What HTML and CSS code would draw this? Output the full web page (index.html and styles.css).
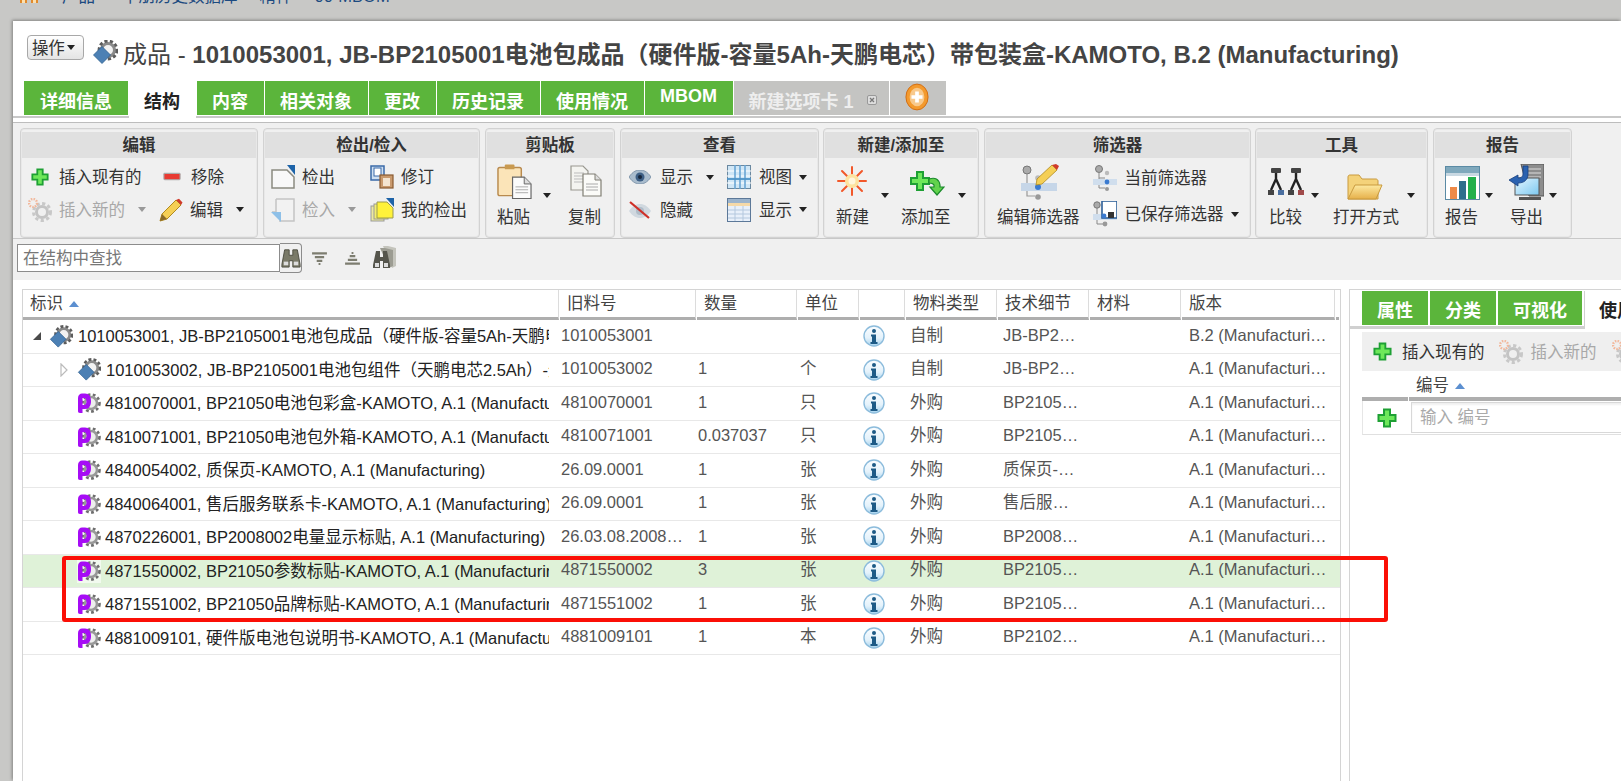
FILE: index.html
```html
<!DOCTYPE html>
<html lang="zh-CN">
<head>
<meta charset="utf-8">
<title>成品 - 1010053001</title>
<link rel="stylesheet" href="styles.css">
</head>
<body>
<svg class="defs" xmlns="http://www.w3.org/2000/svg">
  <defs>
    <linearGradient id="gInfo" x1="0" y1="0" x2="0" y2="1"><stop offset="0" stop-color="#fbfdff"/><stop offset=".6" stop-color="#e4f2fb"/><stop offset="1" stop-color="#a4d2ee"/></linearGradient>
    <linearGradient id="gFolder" x1="0" y1="0" x2="0" y2="1"><stop offset="0" stop-color="#fde9a0"/><stop offset="1" stop-color="#e6b04a"/></linearGradient>
    <linearGradient id="gScreen" x1="0" y1="0" x2="1" y2="1"><stop offset="0" stop-color="#e4f6ff"/><stop offset="1" stop-color="#7cc8f0"/></linearGradient>
    <symbol id="gd" viewBox="0 0 26 24"><circle cx="16" cy="10" r="6.500" fill="#f2f2f2" stroke="#8a8a8a" stroke-width="3"/><circle cx="16" cy="10" r="9" fill="none" stroke="#5c5c5c" stroke-width="2.800" stroke-dasharray="3.200 2.300"/><path d="M10 6.500l8.500 8.500L10 23.500 1.500 15z" fill="#4c80b4" stroke="#2f5f90" stroke-width=".8"/></symbol>
    <symbol id="part" viewBox="0 0 24 24"><rect width="24" height="24" fill="#fff" opacity=".6"/><circle cx="14" cy="12" r="6" fill="#eee" stroke="#999" stroke-width="2.600"/><circle cx="14" cy="12" r="8.500" fill="none" stroke="#6e6e6e" stroke-width="2.600" stroke-dasharray="2.800 2.400"/><path fill-rule="evenodd" d="M1 7c0-3 2-4.500 4-4.500h3c4 0 6 3 6 7.500s-2 8-6 8H5.500v4H3c-1.500 0-2-1-2-2zM5.500 7v7H7c1.500 0 2.500-1.500 2.500-3.500S8.500 7 7 7z" fill="#a60cf5"/></symbol>
    <symbol id="info" viewBox="0 0 22 22"><circle cx="11" cy="11" r="10" fill="url(#gInfo)" stroke="#8cbcdc" stroke-width="1.400"/><circle cx="11" cy="6" r="2" fill="#1d5a86"/><path d="M8 9.500h5v7.500h1.500v2h-7v-2H9v-5.500H8z" fill="#1d5a86"/></symbol>
    <symbol id="plus" viewBox="0 0 20 20"><path d="M7 1.500h6v5.500h5.500v6H13v5.500H7V13H1.500V7H7z" fill="#6ee85a" stroke="#1ea034" stroke-width="2"/></symbol>
    <symbol id="minus" viewBox="0 0 20 20"><rect x="1" y="6" width="18" height="7" rx="1" fill="#e83a32" stroke="#aaa" stroke-width="1.200"/></symbol>
    <symbol id="gearnew" viewBox="0 0 24 24"><circle cx="14" cy="14" r="5.500" fill="none" stroke="#c4c4c4" stroke-width="3"/><circle cx="14" cy="14" r="8.500" fill="none" stroke="#c8c8c8" stroke-width="3" stroke-dasharray="3.200 2.500"/><circle cx="5" cy="5" r="4" fill="none" stroke="#f2b79a" stroke-width="2.400" stroke-dasharray="1.500 1.200"/></symbol>
    <symbol id="pencil" viewBox="0 0 24 24"><path d="M1 23l2-7L17 2l5 5L8 21z" fill="#f5cf55" stroke="#b08a20" stroke-width="1"/><path d="M17 2l5 5 1.500-2.500L20 .8z" fill="#d03a2a"/><path d="M1 23l2-7 5 5z" fill="#8a6a2a"/></symbol>
    <symbol id="checkout" viewBox="0 0 24 24"><path d="M1 5h15l7 7v11H1z" fill="#f8f8f8" stroke="#8a8a80" stroke-width="1.500"/><path d="M16 0h8v10z" fill="#1d63a8"/></symbol>
    <symbol id="rev" viewBox="0 0 24 24"><rect x="1" y="1" width="13" height="14" fill="#cfe0f2" stroke="#3a69a8" stroke-width="1.500"/><rect x="4" y="3" width="7" height="8" fill="#fff" stroke="#3a69a8"/><rect x="10" y="10" width="13" height="13" fill="#c99a6e" stroke="#8a5a30" stroke-width="1.200"/><rect x="13" y="13" width="7" height="8" fill="#f4e4d0"/></symbol>
    <symbol id="checkin" viewBox="0 0 24 24"><path d="M5 1h18v22H8" fill="#f2f2f2" stroke="#c4c4c4" stroke-width="1.500"/><path d="M5 1v13H1" fill="none" stroke="#c4c4c4" stroke-width="1.500"/><path d="M0 14h10v10z" fill="#8ec0e8"/></symbol>
    <symbol id="mine" viewBox="0 0 24 24"><rect x="1" y="8" width="13" height="15" fill="#ece9a0" stroke="#999" stroke-width="1"/><rect x="4" y="6" width="14" height="15" fill="#f3ee70" stroke="#999" stroke-width="1"/><path d="M7 4h10l6 6v10H7z" fill="#fff23a" stroke="#9a9a50" stroke-width="1"/><path d="M16 0h8v9z" fill="#1d63a8"/></symbol>
    <symbol id="paste" viewBox="0 0 36 36"><rect x="1" y="3" width="24" height="29" rx="2" fill="#fbe4b8" stroke="#b88a4e" stroke-width="1.500"/><rect x="8" y="0" width="10" height="5" rx="1" fill="#c99a50"/><path d="M16 13h12l7 7v15H16z" fill="#fbfbfb" stroke="#666" stroke-width="1.200"/><path d="M28 13v7h7" fill="#ddd" stroke="#666"/><path d="M19 23h13M19 26h13M19 29h13" stroke="#aaa"/></symbol>
    <symbol id="copy" viewBox="0 0 32 32"><path d="M1 1h12l5 5v19H1z" fill="#f4f4f0" stroke="#999890" stroke-width="1.200"/><path d="M4 8h10M4 11h10M4 14h10M4 17h10" stroke="#bbb"/><path d="M13 9h12l6 6v16H13z" fill="#fbfbf8" stroke="#807f74" stroke-width="1.200"/><path d="M25 9v6h6" fill="#ddd" stroke="#807f74"/><path d="M16 19h12M16 22h12M16 25h12" stroke="#aaa"/></symbol>
    <symbol id="eye" viewBox="0 0 22 14"><path d="M0 7C4 1 8 0 11 0s7 1 11 7c-4 6-8 7-11 7S4 13 0 7z" fill="#a9bccd" stroke="#7088a0" stroke-width=".8"/><circle cx="11" cy="7" r="4.500" fill="#3d5f85"/><circle cx="11" cy="7" r="2" fill="#16263c"/></symbol>
    <symbol id="eyeoff" viewBox="0 0 22 18"><path d="M0 10C4 4 8 3 11 3s7 1 11 7c-4 6-8 7-11 7S4 16 0 10z" fill="#d0d8df"/><circle cx="11" cy="10" r="4" fill="#b0bcc8"/><path d="M1 1l19 16" stroke="#cf3028" stroke-width="2.200"/></symbol>
    <symbol id="grid" viewBox="0 0 24 24"><rect x=".5" y=".5" width="23" height="23" fill="#cfe6f6" stroke="#6a88a0"/><path d="M0 6h24M0 11h24M0 18h24" stroke="#fff"/><path d="M8 0v24M13 0v24M18 0v24" stroke="#6aa6d4" stroke-width="1.600"/><path d="M0 14h24" stroke="#4e94c8" stroke-width="1.800"/></symbol>
    <symbol id="table" viewBox="0 0 24 24"><rect x=".5" y=".5" width="23" height="23" fill="#e8f0fa" stroke="#5c7898"/><rect x="1" y="1" width="22" height="4" fill="#9cb4cc"/><rect x="1" y="5" width="22" height="3" fill="#f5d9a8"/><path d="M1 12h22M1 16h22M1 20h22M8 8v15M16 8v15" stroke="#b4c8de"/></symbol>
    <symbol id="star" viewBox="0 0 30 30"><g stroke="#f2582a" stroke-width="2" stroke-linecap="round"><path d="M15 1v8M15 21v8M1 15h8M21 15h8M5 5l5 5M20 20l5 5M25 5l-5 5M10 20l-5 5"/></g><circle cx="15" cy="15" r="7" fill="#fde3a0"/><circle cx="15" cy="15" r="3.500" fill="#fff6dc"/></symbol>
    <symbol id="addto" viewBox="0 0 36 25"><path d="M8 1h6v6h6v6h-6v6H8v-6H2V7h6z" fill="#6ee85a" stroke="#1ea034" stroke-width="2"/><path d="M20 8c6-2 10 0 11 6v2h4l-7 8-7-8h4v-2c-1-2-3-2-5-2z" fill="#62d24c" stroke="#1b8a2c" stroke-width="1.200"/></symbol>
    <symbol id="fedit" viewBox="0 0 38 36"><circle cx="6" cy="6" r="4" fill="#aaa" stroke="#777"/><path d="M6 10v22h8M6 20h8M6 32h6" fill="none" stroke="#999" stroke-width="1.200"/><rect y="19" width="36" height="8" fill="#c6d6e8"/><circle cx="17" cy="23" r="3" fill="#3a7ad0"/><circle cx="17" cy="33" r="2.800" fill="#999"/><circle cx="17" cy="14" r="2.800" fill="#bbb"/><path d="M16 15L31 1l5 5-15 14-6 1z" fill="#f5cf55" stroke="#b08a20" stroke-width=".8"/><path d="M31 1l5 5 2-4-3-2z" fill="#d03a2a"/></symbol>
    <symbol id="fcur" viewBox="0 0 24 26"><circle cx="6" cy="4" r="3.500" fill="#aaa" stroke="#777"/><path d="M6 7v16h6M6 13h6" fill="none" stroke="#888"/><rect y="14" width="24" height="6" fill="#d0deed"/><circle cx="14" cy="8" r="2.200" fill="#bbb"/><circle cx="14" cy="17" r="2.400" fill="#3a7ad0"/><circle cx="14" cy="24" r="2" fill="#999"/></symbol>
    <symbol id="fsave" viewBox="0 0 24 26"><circle cx="4" cy="4" r="3.200" fill="#aaa" stroke="#777"/><path d="M4 7v16h6M4 15h6" fill="none" stroke="#888"/><rect y="13" width="24" height="6" fill="#d0deed"/><rect x="9" y="0" width="15" height="17" fill="#fff" stroke="#2d5f98" stroke-width="1.600"/><rect x="15" y="11" width="6" height="6" fill="#333"/><circle cx="11" cy="15" r="2.400" fill="#3a7ad0"/><circle cx="12" cy="23" r="2.400" fill="#999"/></symbol>
    <symbol id="cmp" viewBox="0 0 36 28"><g fill="none" stroke="#222" stroke-width="2.400"><path d="M8 5v6L3 22M8 11l5 11"/><path d="M28 5v6l-5 11M28 11l5 11"/></g><rect x="3" y="0" width="10" height="5" rx="1" fill="#444"/><rect x="23" y="0" width="10" height="5" rx="1" fill="#444"/><rect x="0" y="22" width="6" height="5" fill="#444"/><rect x="10" y="22" width="6" height="5" fill="#4a6fa0"/><rect x="20" y="22" width="6" height="5" fill="#444"/><rect x="30" y="22" width="6" height="5" fill="#a04a4a"/></symbol>
    <symbol id="folder" viewBox="0 0 36 26"><path d="M1 25V3c0-1.500 1-2 2-2h9l3 4h14c1 0 2 1 2 2v18z" fill="#f4d27a" stroke="#c99a3e" stroke-width="1"/><path d="M1 25l7-14h27l-6 14z" fill="url(#gFolder)" stroke="#c99a3e" stroke-width="1"/></symbol>
    <symbol id="chart" viewBox="0 0 35 34"><rect x=".5" y=".5" width="34" height="33" fill="#fff" stroke="#5a8aa4"/><rect x="1" y="1" width="33" height="6" fill="#7fa8bc"/><rect x="1" y="7" width="33" height="3" fill="#c8d8e2"/><rect x="5" y="21" width="7" height="12" fill="#ee8a48"/><rect x="14" y="15" width="7" height="18" fill="#2e6e8c"/><rect x="23" y="11" width="8" height="22" fill="#22b04c"/></symbol>
    <symbol id="export" viewBox="0 0 35 36"><path d="M12 0h23v32H20z" fill="#8d8d8d" stroke="#555"/><path d="M16 5h16M16 9h16M16 13h16" stroke="#ddd"/><rect x="6" y="14" width="24" height="17" fill="url(#gScreen)" stroke="#555"/><path d="M10 33h22v3H10z" fill="#555"/><path d="M14 2v8c0 3-2 4-5 4v-3L0 16l9 6v-3c6 0 10-3 10-9V2z" fill="#2a62b0" stroke="#173f7e" stroke-width=".8"/></symbol>
    <symbol id="binoc" viewBox="0 0 22 22"><path d="M4 2h5v6h4V2h5l3 16v3h-8v-7H9v7H1v-3z" fill="#7a7a68" stroke="#4a4a3e"/><rect x="3" y="15" width="5" height="4" fill="#ddd"/><rect x="14" y="15" width="5" height="4" fill="#ddd"/></symbol>
    <symbol id="binocs" viewBox="0 0 24 26"><path d="M10 1h5l8 2v18l-4 2z" fill="#c4c4bc"/><path d="M7 3h5l8 2v16l-4 2z" fill="#9c9c92"/><path d="M3 6h4v6h3V6h4l3 14v3h-7v-7H7v7H0v-3z" fill="#55554c"/><rect x="2" y="18" width="4" height="4" fill="#ddd"/><rect x="11" y="18" width="4" height="4" fill="#ddd"/></symbol>
    <symbol id="fdown" viewBox="0 0 16 14"><path d="M0 1.500h16M3 5.500h10M5 9.500h6M7 13h2" stroke="#7d7d70" stroke-width="2.400"/></symbol>
    <symbol id="fup" viewBox="0 0 16 14"><path d="M7 1h2M5 4.500h6M3 8.500h10M0 12.500h16" stroke="#7d7d70" stroke-width="2.400"/></symbol>
    <symbol id="addtab" viewBox="0 0 26 30"><ellipse cx="13" cy="15" rx="12" ry="14" fill="#f39a2e" stroke="#d06a10"/><ellipse cx="13" cy="15" rx="8" ry="10" fill="#f8c98c"/><path d="M11 9h4v4h4v4h-4v4h-4v-4H7v-4h4z" fill="#fff"/></symbol>
    <symbol id="xclose" viewBox="0 0 10 10"><rect x=".5" y=".5" width="9" height="9" rx="1.500" fill="#ddd" stroke="#999"/><path d="M3 3l4 4M7 3L3 7" stroke="#777" stroke-width="1.300"/></symbol>
    <symbol id="home" viewBox="0 0 18 18"><rect x="0" y="0" width="7" height="18" fill="#e08a2c"/><rect x="11" y="0" width="7" height="18" fill="#e08a2c"/><rect x="2" y="12" width="3" height="6" fill="#fbe0b0"/><rect x="13" y="12" width="3" height="6" fill="#fbe0b0"/></symbol>
    <symbol id="tri-open" viewBox="0 0 8 8"><path d="M8 0v8H0z" fill="#4a4a4a"/></symbol>
    <symbol id="tri-closed" viewBox="0 0 8 14"><path d="M1 1l6 6-6 6z" fill="#fff" stroke="#bbb" stroke-width="1.200"/></symbol>
  </defs>
</svg>

<div class="crumb">
  <svg class="home"><use href="#home"/></svg>
  <span class="c1">产品</span>
  <span class="c2">中朋历史数据库</span>
  <span class="c3">精件</span>
  <span class="c4">00-MBOM</span>
</div>

<div class="page">
  <header class="title">
    <button class="act">操作<i class="caret tight"></i></button>
    <svg class="title-ic"><use href="#gd"/></svg>
    <h1>成品 - <b>1010053001, JB-BP2105001电池包成品（硬件版-容量5Ah-天鹏电芯）带包装盒-KAMOTO, B.2 (Manufacturing)</b></h1>
  </header>

  <nav class="tabs">
    <a class="tab first">详细信息</a>
    <a class="tab on">结构</a>
    <a class="tab">内容</a>
    <a class="tab">相关对象</a>
    <a class="tab">更改</a>
    <a class="tab">历史记录</a>
    <a class="tab">使用情况</a>
    <a class="tab up">MBOM</a>
    <a class="tab off">新建选项卡 1<svg class="x"><use href="#xclose"/></svg></a>
    <a class="tab plus-tab"><svg class="addtab"><use href="#addtab"/></svg></a>
  </nav>

  <section class="ribbon">
    <div class="bar">
      <div class="grp g1">
        <h3>编辑</h3>
        <div class="rows">
          <div class="tool"><svg class="ic"><use href="#plus"/></svg>插入现有的</div>
          <div class="tool"><svg class="ic"><use href="#minus"/></svg>移除</div>
          <div class="tool dis"><svg class="ic"><use href="#gearnew"/></svg>插入新的<i class="caret gray"></i></div>
          <div class="tool"><svg class="ic"><use href="#pencil"/></svg>编辑<i class="caret"></i></div>
        </div>
      </div>
      <div class="grp g2">
        <h3>检出/检入</h3>
        <div class="rows">
          <div class="tool"><svg class="ic"><use href="#checkout"/></svg>检出</div>
          <div class="tool"><svg class="ic"><use href="#rev"/></svg>修订</div>
          <div class="tool dis"><svg class="ic"><use href="#checkin"/></svg>检入<i class="caret gray"></i></div>
          <div class="tool"><svg class="ic"><use href="#mine"/></svg>我的检出</div>
        </div>
      </div>
      <div class="grp g3">
        <h3>剪贴板</h3>
        <div class="bigs">
          <div class="big"><div class="top"><svg class="b-paste"><use href="#paste"/></svg><i class="caret near11"></i></div><span>粘贴</span></div>
          <div class="big copy"><div class="top"><svg class="b-copy"><use href="#copy"/></svg></div><span>复制</span></div>
        </div>
      </div>
      <div class="grp g4">
        <h3>查看</h3>
        <div class="rows">
          <div class="tool"><svg class="ic eye"><use href="#eye"/></svg>显示<i class="caret"></i></div>
          <div class="tool"><svg class="ic"><use href="#grid"/></svg>视图<i class="caret near"></i></div>
          <div class="tool"><svg class="ic eye tall"><use href="#eyeoff"/></svg>隐藏</div>
          <div class="tool"><svg class="ic"><use href="#table"/></svg>显示<i class="caret near"></i></div>
        </div>
      </div>
      <div class="grp g5">
        <h3>新建/添加至</h3>
        <div class="bigs">
          <div class="big"><div class="top"><svg class="b-star"><use href="#star"/></svg><i class="caret near14"></i></div><span>新建</span></div>
          <div class="big add"><div class="top"><svg class="b-add"><use href="#addto"/></svg><i class="caret near13"></i></div><span>添加至</span></div>
        </div>
      </div>
      <div class="grp g6">
        <h3>筛选器</h3>
        <div class="bigs">
          <div class="big"><div class="top"><svg class="b-fedit"><use href="#fedit"/></svg></div><span>编辑筛选器</span></div>
          <div class="fcol">
            <div class="tool"><svg class="ic filt"><use href="#fcur"/></svg>当前筛选器</div>
            <div class="tool"><svg class="ic filt"><use href="#fsave"/></svg>已保存筛选器<i class="caret near"></i></div>
          </div>
        </div>
      </div>
      <div class="grp g7">
        <h3>工具</h3>
        <div class="bigs">
          <div class="big cmpb"><div class="top"><svg class="b-cmp"><use href="#cmp"/></svg><i class="caret near"></i></div><span>比较</span></div>
          <div class="big openwith"><div class="top"><svg class="b-folder"><use href="#folder"/></svg><i class="caret near24"></i></div><span>打开方式</span></div>
        </div>
      </div>
      <div class="grp g8">
        <h3>报告</h3>
        <div class="bigs">
          <div class="big"><div class="top"><svg class="b-chart"><use href="#chart"/></svg><i class="caret near5"></i></div><span>报告</span></div>
          <div class="big exp"><div class="top"><svg class="b-export"><use href="#export"/></svg><i class="caret near5"></i></div><span>导出</span></div>
        </div>
      </div>
    </div>
    <div class="search">
      <input class="find" placeholder="在结构中查找">
      <button class="find-btn"><svg class="s-bin"><use href="#binoc"/></svg></button>
      <svg class="s-f1"><use href="#fdown"/></svg>
      <svg class="s-f2"><use href="#fup"/></svg>
      <svg class="s-bins"><use href="#binocs"/></svg>
    </div>
  </section>

  <main class="main">
    <section class="tree">
      <div class="thead">
        <div class="th">标识<i class="sort"></i></div>
        <div class="th">旧料号</div>
        <div class="th">数量</div>
        <div class="th">单位</div>
        <div class="th"></div>
        <div class="th">物料类型</div>
        <div class="th">技术细节</div>
        <div class="th">材料</div>
        <div class="th">版本</div>
        <div class="th end"></div>
      </div>

      <div class="tr">
        <div class="name lv0"><svg class="tri expanded"><use href="#tri-open"/></svg><svg class="ico"><use href="#gd"/></svg><span>1010053001, JB-BP2105001电池包成品（硬件版-容量5Ah-天鹏电芯）带包装盒-KAMOTO, B.2 (Manufacturing)</span></div>
        <div class="td">1010053001</div><div class="td"></div><div class="td"></div>
        <div class="info"><svg><use href="#info"/></svg></div>
        <div class="td">自制</div><div class="td">JB-BP2105001</div><div class="td"></div><div class="td">B.2 (Manufacturing)</div>
      </div>
      <div class="tr">
        <div class="name lv1"><svg class="tri closed"><use href="#tri-closed"/></svg><svg class="ico"><use href="#gd"/></svg><span>1010053002, JB-BP2105001电池包组件（天鹏电芯2.5Ah）-无包装-KAMOTO, A.1 (Manufacturing)</span></div>
        <div class="td">1010053002</div><div class="td">1</div><div class="td">个</div>
        <div class="info"><svg><use href="#info"/></svg></div>
        <div class="td">自制</div><div class="td">JB-BP2105001</div><div class="td"></div><div class="td">A.1 (Manufacturing)</div>
      </div>
      <div class="tr">
        <div class="name lv2"><svg class="pico"><use href="#part"/></svg><span>4810070001, BP21050电池包彩盒-KAMOTO, A.1 (Manufacturing)</span></div>
        <div class="td">4810070001</div><div class="td">1</div><div class="td">只</div>
        <div class="info"><svg><use href="#info"/></svg></div>
        <div class="td">外购</div><div class="td">BP21050电池包彩盒</div><div class="td"></div><div class="td">A.1 (Manufacturing)</div>
      </div>
      <div class="tr">
        <div class="name lv2"><svg class="pico"><use href="#part"/></svg><span>4810071001, BP21050电池包外箱-KAMOTO, A.1 (Manufacturing)</span></div>
        <div class="td">4810071001</div><div class="td">0.037037</div><div class="td">只</div>
        <div class="info"><svg><use href="#info"/></svg></div>
        <div class="td">外购</div><div class="td">BP21050电池包外箱</div><div class="td"></div><div class="td">A.1 (Manufacturing)</div>
      </div>
      <div class="tr">
        <div class="name lv2"><svg class="pico"><use href="#part"/></svg><span>4840054002, 质保页-KAMOTO, A.1 (Manufacturing)</span></div>
        <div class="td">26.09.0001</div><div class="td">1</div><div class="td">张</div>
        <div class="info"><svg><use href="#info"/></svg></div>
        <div class="td">外购</div><div class="td">质保页-KAMOTO</div><div class="td"></div><div class="td">A.1 (Manufacturing)</div>
      </div>
      <div class="tr">
        <div class="name lv2"><svg class="pico"><use href="#part"/></svg><span>4840064001, 售后服务联系卡-KAMOTO, A.1 (Manufacturing)</span></div>
        <div class="td">26.09.0001</div><div class="td">1</div><div class="td">张</div>
        <div class="info"><svg><use href="#info"/></svg></div>
        <div class="td">外购</div><div class="td">售后服务联系卡</div><div class="td"></div><div class="td">A.1 (Manufacturing)</div>
      </div>
      <div class="tr">
        <div class="name lv2"><svg class="pico"><use href="#part"/></svg><span>4870226001, BP2008002电量显示标贴, A.1 (Manufacturing)</span></div>
        <div class="td">26.03.08.2008002</div><div class="td">1</div><div class="td">张</div>
        <div class="info"><svg><use href="#info"/></svg></div>
        <div class="td">外购</div><div class="td">BP2008002电量</div><div class="td"></div><div class="td">A.1 (Manufacturing)</div>
      </div>
      <div class="tr sel">
        <div class="name lv2"><svg class="pico"><use href="#part"/></svg><span>4871550002, BP21050参数标贴-KAMOTO, A.1 (Manufacturing)</span></div>
        <div class="td">4871550002</div><div class="td">3</div><div class="td">张</div>
        <div class="info"><svg><use href="#info"/></svg></div>
        <div class="td">外购</div><div class="td">BP21050参数标贴</div><div class="td"></div><div class="td">A.1 (Manufacturing)</div>
      </div>
      <div class="tr">
        <div class="name lv2"><svg class="pico"><use href="#part"/></svg><span>4871551002, BP21050品牌标贴-KAMOTO, A.1 (Manufacturing)</span></div>
        <div class="td">4871551002</div><div class="td">1</div><div class="td">张</div>
        <div class="info"><svg><use href="#info"/></svg></div>
        <div class="td">外购</div><div class="td">BP21050品牌标贴</div><div class="td"></div><div class="td">A.1 (Manufacturing)</div>
      </div>
      <div class="tr">
        <div class="name lv2"><svg class="pico"><use href="#part"/></svg><span>4881009101, 硬件版电池包说明书-KAMOTO, A.1 (Manufacturing)</span></div>
        <div class="td">4881009101</div><div class="td">1</div><div class="td">本</div>
        <div class="info"><svg><use href="#info"/></svg></div>
        <div class="td">外购</div><div class="td">BP21020说明书</div><div class="td"></div><div class="td">A.1 (Manufacturing)</div>
      </div>
    </section>

    <aside class="side">
      <div class="side-tabs">
        <a class="stab w1">属性</a>
        <a class="stab w1">分类</a>
        <a class="stab w2">可视化</a>
        <a class="stab on">使用情况</a>
      </div>
      <div class="side-body">
        <div class="side-tools">
          <svg class="st-plus"><use href="#plus"/></svg><span class="st-a">插入现有的</span>
          <svg class="st-gear"><use href="#gearnew"/></svg><span class="st-b">插入新的</span>
          <svg class="st-gear2"><use href="#gearnew"/></svg>
        </div>
        <div class="side-head">
          <div class="sh0"></div>
          <div class="sh1">编号<i class="sort"></i></div>
        </div>
        <div class="side-row">
          <div class="sr0"><svg><use href="#plus"/></svg></div>
          <input class="sr-in" placeholder="输入 编号">
        </div>
      </div>
    </aside>
  </main>
</div>

<div class="mark"></div>
</body>
</html>
```
FILE: styles.css
```css
* { box-sizing: border-box; }
html, body { margin: 0; height: 781px; overflow: hidden; }
body {
  position: relative;
  width: 1621px;
  background: #c8c8c6;
  font: 16.5px/20px "Liberation Sans", "Noto Sans CJK SC", sans-serif;
  color: #333;
}
.defs { position: absolute; width: 0; height: 0; }
i { font-style: normal; }
svg { display: block; flex: none; }
h1, h3 { margin: 0; }

/* breadcrumb, cut off by the window */
.crumb { height: 21px; display: flex; align-items: flex-start; padding-left: 20px; color: #1c4a80; overflow: hidden; }
.home { width: 18px; height: 18px; margin-top: -15px; }
.crumb span { margin-top: -14px; }
.c1 { margin-left: 24px; }
.c2 { margin-left: 27px; }
.c3 { margin-left: 22px; }
.c4 { margin-left: 22px; }

.page { margin-left: 13px; height: 760px; background: #fff; box-shadow: -1px -1px 3px rgba(0,0,0,.35); overflow: hidden; }

/* title */
.title { height: 60px; padding: 14px 0 0 14px; display: flex; align-items: flex-start; }
.act { width: 57px; height: 25px; padding: 0 0 0 4px; display: flex; align-items: center; background: linear-gradient(#fff, #e4e4e4); border: 1px solid #a8a8a8; border-radius: 4px; font: inherit; color: #333; letter-spacing: -.3px; }
.title-ic { width: 26px; height: 24px; margin: 5px 5px 0 8px; }
.title h1 { margin-top: 4px; font-size: 24px; line-height: 32px; font-weight: 400; color: #444; white-space: nowrap; }
.title b { font-weight: 700; }

/* main tabs */
.tabs { height: 37px; padding-left: 11px; display: flex; align-items: flex-start; gap: 1px; border-bottom: 2px solid #c8c8c8; }
.tab { height: 34px; padding: 8px 15.5px 0; background: #5bb53b; color: #fff; font-weight: 700; font-size: 18px; line-height: 26px; white-space: nowrap; }
.tab.first { padding-left: 16px; }
.tab.on { height: 37px; background: #fff; color: #222; position: relative; }
.tab.up { padding-top: 2px; }
.tab.off { width: 155px; background: #c4c4c2; color: #eee; padding-left: 15px; display: flex; align-items: flex-start; }
.x { width: 10px; height: 10px; margin: 6px 0 0 13px; }
.plus-tab { width: 56px; padding: 0; background: #c4c4c2; }
.addtab { width: 24px; height: 28px; margin: 2px 0 0 15px; }

/* ribbon */
.ribbon { margin-top: 4px; border-top: 1px solid #bdbdbd; background: #f0f0f0; }
.bar { height: 116px; padding: 5px 0 0 7px; display: flex; gap: 5px; border-bottom: 1px solid #c8c8c8; }
.grp { height: 110px; border: 1px solid #d2d2d2; border-radius: 4px; box-shadow: inset 0 0 0 1px #e8e8e8; }
.grp h3 { height: 26px; margin: 3px 1px 0; background: #e0e0e0; font-size: 16.5px; line-height: 26px; font-weight: 700; text-align: center; color: #333; }
.g1 { width: 238px; } .g2 { width: 217px; } .g3 { width: 130px; } .g4 { width: 199px; }
.g5 { width: 156px; margin-left: -1px; } .g6 { width: 267px; } .g7 { width: 173px; margin-left: -1px; } .g8 { width: 139px; }

.rows { display: grid; grid-auto-rows: 32.5px; padding-top: 3px; }
.g1 .rows { grid-template-columns: 131px 1fr; padding-left: 7px; }
.g2 .rows { grid-template-columns: 99px 1fr; padding-left: 7px; }
.g4 .rows { grid-template-columns: 98px 1fr; padding-left: 8px; }

.tool { display: flex; align-items: center; white-space: nowrap; color: #333; }
.tool.dis { color: #a8a8a8; }
.ic { width: 24px; height: 24px; margin-right: 7px; }
.ic.eye { width: 22px; height: 14px; margin-right: 9px; }
.ic.eye.tall { height: 18px; }
.g4 .tool:nth-child(even) .ic { margin-right: 8px; }
.g1 .tool:first-child .ic, .g1 .tool:nth-child(2) .ic { width: 18px; height: 18px; margin: 0 10px 0 3px; }
.g1 .tool:nth-child(2) .ic { margin: 0 10px 0 4px; }

.caret { display: block; width: 0; height: 0; margin-left: 13px; border: 4.5px solid transparent; border-top: 5px solid #222; border-bottom: 0; flex: none; }
.caret.gray { border-top-color: #999; }
.caret.near { margin-left: 7px; }
.caret.near5 { margin-left: 5px; }
.caret.near11 { margin-left: 11px; }
.caret.near13 { margin-left: 13px; }
.caret.near14 { margin-left: 14px; }
.caret.near24 { margin-left: 24px; }
.caret.tight { margin-left: 3px; }

.bigs { display: flex; padding-top: 3px; }
.g3 .bigs { padding-left: 11px; }
.g5 .bigs { padding-left: 12px; }
.g6 .bigs { padding-left: 12px; }
.g7 .bigs { padding-left: 12px; }
.g8 .bigs { padding-left: 11px; }
.big { display: flex; flex-direction: column; white-space: nowrap; }
.big .top { height: 39px; display: flex; align-items: flex-end; }
.big .top .caret { margin-bottom: 2px; }
.big span { margin-top: 7px; color: #333; }
.b-paste { width: 35px; height: 36px; }
.copy { margin-left: 17px; }
.b-copy { width: 32px; height: 32px; margin: 0 0 3px 2px; }
.b-star { width: 30px; height: 30px; margin: 0 0 4px 1px; }
.big.add { margin-left: 12px; }
.b-add { width: 36px; height: 25px; margin: 0 0 4px 8px; }
.b-fedit { width: 38px; height: 36px; margin-left: 24px; }
.fcol { margin-left: 13px; display: flex; flex-direction: column; gap: 2px; }
.fcol .tool { height: 34px; }
.ic.filt { height: 26px; margin-right: 8px; }
.cmpb span { margin-left: 1px; }
.b-cmp { width: 36px; height: 28px; margin-bottom: 4px; }
.openwith { margin-left: 14px; }
.b-folder { width: 36px; height: 26px; margin-left: 14px; }
.b-chart { width: 35px; height: 34px; }
.exp { margin-left: 17px; }
.b-export { width: 35px; height: 36px; margin-left: -1px; }

/* find bar */
.search { height: 41px; padding: 0 0 3px 4px; display: flex; align-items: center; }
.find { width: 263px; height: 28px; padding: 0 5px; border: 1px solid #8c8c8c; background: #fff; font: inherit; }
.find::placeholder, .sr-in::placeholder { opacity: 1; }
.find::placeholder { color: #777; }
.find-btn { width: 22px; height: 30px; padding: 0 0 0 1px; background: #f0f0f0; border: 1px solid #8c8c8c; border-left: 0; border-radius: 0 4px 4px 0; }
.s-bin { width: 20px; height: 20px; }
.s-f1, .s-f2 { width: 15px; height: 13px; }
.s-f1 { margin-left: 10px; }
.s-f2 { margin-left: 18px; }
.s-bins { width: 24px; height: 26px; margin-left: 13px; }

/* structure table */
.main { display: flex; align-items: flex-start; padding: 9px 0 0 9px; }
.tree { width: 1319px; height: 500px; flex: none; border: 1px solid #d4d4d4; border-width: 1px 1px 0; }
.thead { display: grid; grid-template-columns: 537px 137px 101px 62px 46px 92px 92px 92px 154px 3px; height: 30px; }
.th { height: 30px; margin-right: 1px; padding-left: 7px; border-right: 1px solid #dcdcdc; border-bottom: 3px solid #aeaeae; line-height: 27px; color: #444; white-space: nowrap; }
.th.end { border-right: 0; margin: 0; padding: 0; }
.sort { display: inline-block; margin-left: 6px; vertical-align: 2px; border: 5.5px solid transparent; border-bottom: 6px solid #5c8fd0; border-top: 0; }
.tr { display: grid; grid-template-columns: 537px 137px 102px 63px 47px 93px 92px 94px 148px; height: 33.5px; align-items: center; border-bottom: 1px solid #e8e8e8; }
.tr.sel { background: #dff2d8; }
.name { display: flex; align-items: center; height: 32px; padding-right: 11px; color: #222; overflow: hidden; }
.name span { white-space: nowrap; overflow: hidden; min-width: 0; }
.lv0 { padding-left: 10px; }
.lv1 { padding-left: 37px; }
.lv2 { padding-left: 54px; }
.tri.expanded { width: 8px; height: 8px; margin-right: 8px; }
.tri.closed { width: 8px; height: 14px; margin-right: 9px; }
.ico { width: 24px; height: 23px; margin-right: 5px; }
.pico { width: 24px; height: 24px; margin-right: 4px; }
.td { padding: 0 6px 3px 1px; color: #555; white-space: nowrap; overflow: hidden; text-overflow: ellipsis; }
.tr .td:nth-child(2) { padding-right: 12px; }
.tr .td:nth-child(7) { padding-right: 13px; }
.info { padding-left: 1px; }
.info svg { width: 22px; height: 22px; }

/* side panel */
.side { margin-left: 8px; width: 320px; flex: none; height: 500px; border: 1px solid #d4d4d4; border-width: 1px 0 0 1px; overflow: hidden; }
.side-tabs { height: 39px; padding: 1px 0 0 12px; display: flex; align-items: flex-start; gap: 2px; border-bottom: 3px solid #d0d0d0; white-space: nowrap; }
.stab { flex: none; height: 34px; background: #5bb53b; color: #fff; font-size: 18px; font-weight: 700; line-height: 40px; text-align: center; }
.stab.w1 { width: 66px; }
.stab.w2 { width: 84px; }
.stab.on { width: 100px; height: 38px; background: #fff; color: #222; border-left: 1px solid #d0d0d0; padding-left: 14px; text-align: left; position: relative; }
.side-body { padding: 3px 0 0 12px; }
.side-tools { height: 39px; background: #efefef; display: flex; align-items: center; white-space: nowrap; padding-left: 11px; }
.st-plus { width: 19px; height: 19px; margin-right: 10px; }
.st-a { color: #333; }
.st-gear { width: 24px; height: 24px; margin: 0 8px 0 14px; }
.st-b { color: #a8a8a8; }
.st-gear2 { width: 24px; height: 24px; margin-left: 15px; }
.side-head { display: flex; height: 30px; }
.sh0 { width: 46px; border-bottom: 4px solid #aeaeae; margin-right: 1px; }
.sh1 { flex: 1; padding-left: 7px; border-bottom: 4px solid #aeaeae; line-height: 28px; color: #444; }
.side-row { display: flex; height: 34px; align-items: center; border-bottom: 1px solid #e0e0e0; border-left: 1px solid #e6e6e6; }
.sr0 { width: 48px; padding-left: 14px; }
.sr0 svg { width: 20px; height: 20px; }
.sr-in { flex: 1; min-width: 0; height: 31px; padding: 0 8px; border: 1px solid #d8d8d8; box-shadow: inset 0 2px 2px #f0f0f0; font: inherit; }
.sr-in::placeholder { color: #aaa; }

/* hand-drawn annotation over the table */
.mark { position: absolute; left: 62px; top: 556px; width: 1326px; height: 66px; border: 4px solid #fb0f06; border-radius: 3px; }
```
